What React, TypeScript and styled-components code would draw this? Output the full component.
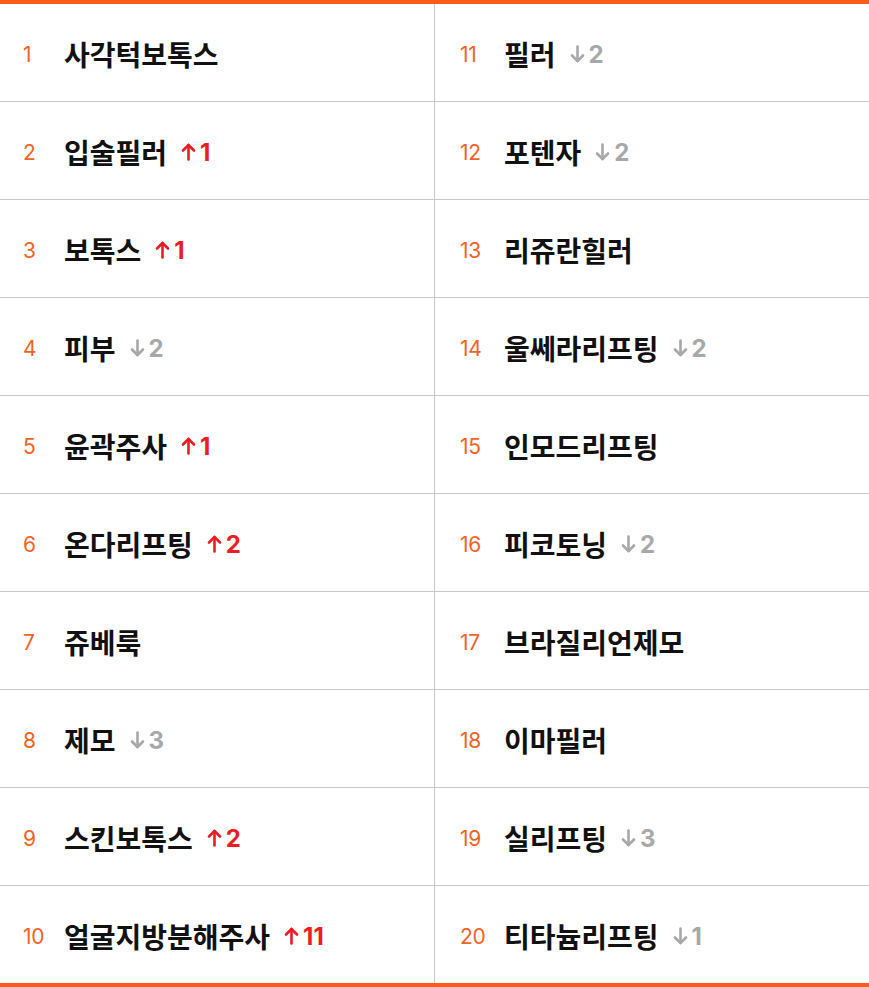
import React from "react";
import styled, { createGlobalStyle } from "styled-components";

const GlobalStyle = createGlobalStyle`
  html, body {
    margin: 0;
    padding: 0;
    background: #fff;
  }
  body {
    font-family: "Noto Sans CJK KR", "Noto Sans", sans-serif;
  }
`;

const Board = styled.div`
  width: 869px;
  border-top: 4px solid #ff5a1a;
  border-bottom: 4px solid #ff5a1a;
  display: grid;
  grid-template-columns: 434px 1fr;
  grid-auto-flow: column;
  grid-template-rows: repeat(10, 97px);
  row-gap: 1px;
  column-gap: 1px;
  background: #c8c8c8;
`;

const Cell = styled.div<{ $right?: boolean }>`
  background: #fff;
  display: flex;
  align-items: center;
  padding-top: 3px;
  padding-left: ${(p) => (p.$right ? "25px" : "23px")};
`;

const Rank = styled.span<{ $right?: boolean }>`
  width: ${(p) => (p.$right ? "44px" : "41px")};
  flex-shrink: 0;
  font-family: Inter, Roboto, sans-serif;
  font-size: 21px;
  font-weight: 400;
  color: #f26325;
  letter-spacing: -0.3px;
`;

const Keyword = styled.span`
  font-family: "Noto Sans CJK KR", sans-serif;
  font-size: 28px;
  font-weight: 700;
  color: #111;
`;

const Change = styled.span<{ $up: boolean }>`
  display: inline-flex;
  align-items: center;
  margin-left: 14px;
  gap: 4px;
  font-family: Inter, Roboto, sans-serif;
  font-size: 24px;
  font-weight: 700;
  color: ${(p) => (p.$up ? "#ec1c24" : "#a8a8a8")};
`;

type Item = { name: string; delta?: number };

const items: Item[] = [
  { name: "사각턱보톡스" },
  { name: "입술필러", delta: 1 },
  { name: "보톡스", delta: 1 },
  { name: "피부", delta: -2 },
  { name: "윤곽주사", delta: 1 },
  { name: "온다리프팅", delta: 2 },
  { name: "쥬베룩" },
  { name: "제모", delta: -3 },
  { name: "스킨보톡스", delta: 2 },
  { name: "얼굴지방분해주사", delta: 11 },
  { name: "필러", delta: -2 },
  { name: "포텐자", delta: -2 },
  { name: "리쥬란힐러" },
  { name: "울쎄라리프팅", delta: -2 },
  { name: "인모드리프팅" },
  { name: "피코토닝", delta: -2 },
  { name: "브라질리언제모" },
  { name: "이마필러" },
  { name: "실리프팅", delta: -3 },
  { name: "티타늄리프팅", delta: -1 },
];

const Arrow = ({ up }: { up: boolean }) => (
  <svg
    width="15"
    height="18"
    viewBox="0 0 15 18"
    fill="none"
    stroke="currentColor"
    strokeWidth="2.6"
    strokeLinecap="round"
    strokeLinejoin="round"
    style={{ transform: up ? "none" : "rotate(180deg)" }}
  >
    <path d="M7.5 16.5V2" />
    <path d="M2 7.5L7.5 2l5.5 5.5" />
  </svg>
);

export default function App() {
  return (
    <>
      <GlobalStyle />
      <Board>
        {items.map((item, i) => {
          const right = i >= 10;
          return (
            <Cell key={i} $right={right}>
              <Rank $right={right}>{i + 1}</Rank>
              <Keyword>{item.name}</Keyword>
              {item.delta !== undefined && (
                <Change $up={item.delta > 0}>
                  <Arrow up={item.delta > 0} />
                  {Math.abs(item.delta)}
                </Change>
              )}
            </Cell>
          );
        })}
      </Board>
    </>
  );
}
